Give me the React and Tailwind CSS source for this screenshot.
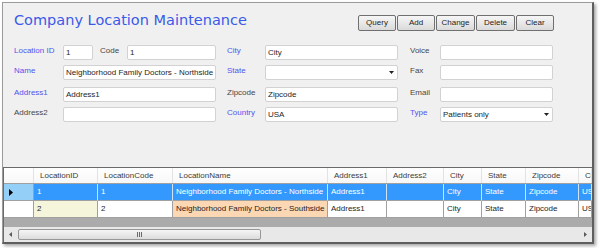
import React from 'react';

const cols = [
  { name: 'LocationID', w: 'w-[64px]' },
  { name: 'LocationCode', w: 'w-[75px]' },
  { name: 'LocationName', w: 'w-[155px]' },
  { name: 'Address1', w: 'w-[59px]' },
  { name: 'Address2', w: 'w-[57px]' },
  { name: 'City', w: 'w-[38px]' },
  { name: 'State', w: 'w-[44px]' },
  { name: 'Zipcode', w: 'w-[53px]' },
  { name: 'Country', w: 'flex-1 min-w-0' },
];

const rows = [
  ['1', '1', 'Neighborhood Family Doctors - Northside', 'Address1', '', 'City', 'State', 'Zipcode', 'USA'],
  ['2', '2', 'Neighborhood Family Doctors - Southside', 'Address1', '', 'City', 'State', 'Zipcode', 'USA'],
];

function Label({ w = 'w-[49px]', blue, children }) {
  return (
    <div className={`${w} shrink-0 h-[15px] pt-[1px] text-[8px] leading-[10px] whitespace-nowrap ${blue ? 'text-[#5353ee]' : 'text-[#474747]'}`}>
      {children}
    </div>
  );
}

function Box({ w, value, select }) {
  return (
    <div className={`${w} shrink-0 h-[15px] bg-white border border-[#d2d2d2] rounded-[2px] flex items-center pl-[2px] pr-[3px] text-[8px] leading-[13px] text-[#1e1e1e] overflow-hidden whitespace-nowrap`}>
      <span className="flex-1">{value}</span>
      {select && (
        <svg width="5" height="3" viewBox="0 0 5 3">
          <path d="M0 0h5L2.5 3z" fill="#222" />
        </svg>
      )}
    </div>
  );
}

function Btn({ w, children }) {
  return (
    <div className={`${w} h-[16px] border border-[#707070] rounded-[2px] bg-gradient-to-b from-[#f6f6f6] to-[#dadada] text-[8px] leading-[14px] text-center text-[#1e1e1e]`}>
      {children}
    </div>
  );
}

export default function App() {
  return (
    <div className="w-[600px] h-[248px] bg-white pt-[2px] pl-[2px] font-['Liberation_Sans',Arial,sans-serif]">
      <div className="w-[592px] bg-[#f0f0f0] border-t border-l border-[#9c9c9c] border-r-2 border-b-2 border-r-[#5e5e5e] border-b-[#5e5e5e] shadow-[2px_2px_3px_rgba(0,0,0,0.35)] flex flex-col">
        {/* header */}
        <div className="h-[42px] flex justify-between pl-[11px] pr-[38px]">
          <div className="mt-[8px] text-[14.5px] leading-[18px] text-[#3a5ae8] font-['DejaVu_Sans',Verdana,sans-serif]">
            Company Location Maintenance
          </div>
          <div className="mt-[12px] flex gap-[1px]">
            <Btn w="w-[38px]">Query</Btn>
            <Btn w="w-[38px]">Add</Btn>
            <Btn w="w-[39px]">Change</Btn>
            <Btn w="w-[39px]">Delete</Btn>
            <Btn w="w-[38px]">Clear</Btn>
          </div>
        </div>

        {/* form */}
        <div className="flex pl-[11px]">
          <Label blue>Location ID</Label>
          <Box w="w-[30px]" value="1" />
          <div className="w-[7px] shrink-0" />
          <Label w="w-[27px]">Code</Label>
          <Box w="w-[89px]" value="1" />
          <div className="w-[11px] shrink-0" />
          <Label w="w-[38px]" blue>City</Label>
          <Box w="w-[133px]" value="City" />
          <div className="w-[12px] shrink-0" />
          <Label w="w-[30px]">Voice</Label>
          <Box w="w-[113px]" value="" />
        </div>
        <div className="flex pl-[11px] mt-[5px]">
          <Label blue>Name</Label>
          <Box w="w-[153px]" value="Neighborhood Family Doctors - Northside" />
          <div className="w-[11px] shrink-0" />
          <Label w="w-[38px]" blue>State</Label>
          <Box w="w-[133px]" value="" select />
          <div className="w-[12px] shrink-0" />
          <Label w="w-[30px]">Fax</Label>
          <Box w="w-[113px]" value="" />
        </div>
        <div className="flex pl-[11px] mt-[7px]">
          <Label blue>Address1</Label>
          <Box w="w-[153px]" value="Address1" />
          <div className="w-[11px] shrink-0" />
          <Label w="w-[38px]">Zipcode</Label>
          <Box w="w-[133px]" value="Zipcode" />
          <div className="w-[12px] shrink-0" />
          <Label w="w-[30px]">Email</Label>
          <Box w="w-[113px]" value="" />
        </div>
        <div className="flex pl-[11px] mt-[5px]">
          <Label>Address2</Label>
          <Box w="w-[153px]" value="" />
          <div className="w-[11px] shrink-0" />
          <Label w="w-[38px]" blue>Country</Label>
          <Box w="w-[133px]" value="USA" />
          <div className="w-[12px] shrink-0" />
          <Label w="w-[30px]" blue>Type</Label>
          <Box w="w-[113px]" value="Patients only" select />
        </div>

        {/* grid */}
        <div className="mt-[45px] border-t border-l border-[#6a6a6a] text-[8px] overflow-hidden">
          <div className="flex h-[16px] bg-gradient-to-b from-white to-[#f7f7f7] border-b border-[#a0a0a0]">
            <div className="w-[30px] shrink-0 border-r border-[#e2e2e2]" />
            {cols.map((c) => (
              <div key={c.name} className={`${c.w} shrink-0 pl-[6px] leading-[15px] text-[#3c3c3c] border-r border-[#e2e2e2] whitespace-nowrap overflow-hidden`}>
                {c.name}
              </div>
            ))}
          </div>
          {rows.map((r, i) => {
            const sel = i === 0;
            return (
              <div key={i} className="flex h-[17px]">
                <div className={`w-[30px] shrink-0 border-r border-b border-[#a0a0a0] flex items-center pl-[5px] ${sel ? 'bg-[#94cff7]' : 'bg-white'}`}>
                  {sel && (
                    <svg width="4" height="7" viewBox="0 0 4 7">
                      <path d="M0 0L4 3.5L0 7z" fill="#000" />
                    </svg>
                  )}
                </div>
                {r.map((v, j) => {
                  let bg = 'bg-white text-[#1e1e1e]';
                  if (sel) bg = 'bg-[#3399ff] text-white';
                  else if (j === 0) bg = 'bg-[#f5f5dc] text-[#1e1e1e]';
                  else if (j === 2) bg = 'bg-[#fcd7b4] text-[#1e1e1e]';
                  return (
                    <div key={j} className={`${cols[j].w} shrink-0 pl-[3px] leading-[16px] border-r border-b ${sel ? 'border-r-[#cfe3f7] border-b-[#a0a0a0]' : 'border-[#a0a0a0]'} ${bg} whitespace-nowrap overflow-hidden`}>
                      {v}
                    </div>
                  );
                })}
              </div>
            );
          })}
          <div className="h-[9px] bg-[#ababab]" />
          {/* horizontal scrollbar */}
          <div className="h-[15px] bg-[#e8e8e8] flex items-center">
            <div className="w-[13px] flex justify-center">
              <svg width="3" height="5" viewBox="0 0 3 5">
                <path d="M3 0L0 2.5L3 5z" fill="#5a5a5a" />
              </svg>
            </div>
            <div className="ml-[1px] w-[243px] h-[11px] border border-[#979797] rounded-[2px] bg-gradient-to-b from-[#f5f5f5] to-[#dcdcdc] flex items-center justify-center gap-[1px]">
              <div className="w-[1px] h-[5px] bg-[#6a6a6a]" />
              <div className="w-[1px] h-[5px] bg-[#6a6a6a]" />
              <div className="w-[1px] h-[5px] bg-[#6a6a6a]" />
            </div>
            <div className="flex-1" />
            <div className="w-[13px] flex justify-center">
              <svg width="3" height="5" viewBox="0 0 3 5">
                <path d="M0 0L3 2.5L0 5z" fill="#5a5a5a" />
              </svg>
            </div>
          </div>
        </div>
      </div>
    </div>
  );
}
